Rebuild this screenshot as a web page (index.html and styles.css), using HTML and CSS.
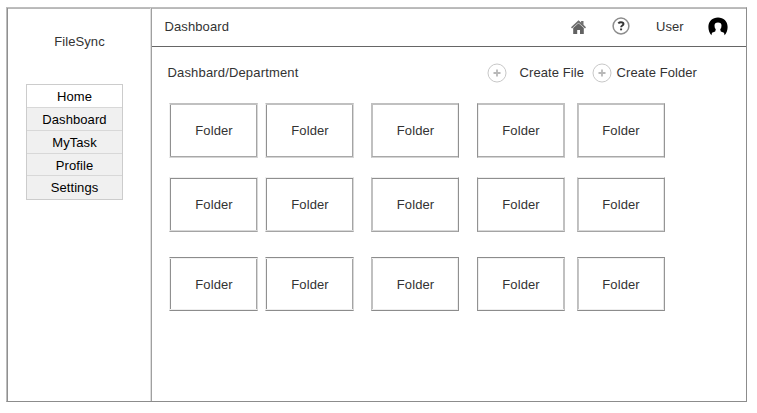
FILE: index.html
```html
<!DOCTYPE html>
<html lang="en">
<head>
<meta charset="utf-8">
<title>FileSync</title>
<link rel="stylesheet" href="styles.css">
</head>
<body>
<div class="window">
  <aside class="sidebar">
    <div class="brand">FileSync</div>
    <nav class="menu">
      <a class="menu-item active">Home</a>
      <a class="menu-item">Dashboard</a>
      <a class="menu-item">MyTask</a>
      <a class="menu-item">Profile</a>
      <a class="menu-item">Settings</a>
    </nav>
  </aside>
  <main class="main">
    <header class="topbar">
      <span class="title">Dashboard</span>
      <svg class="home" viewBox="0 0 15 14" width="15" height="14"><path d="M0 7.2 7.5.2l2.6 2.4V1h2.4v3.7L15 7.2l-1 1.2L7.5 2.8 1 8.4z" fill="#707070"/><path d="M2.2 8 7.5 3.2l5.3 4.8V14H9V10H6.2v4h-4z" fill="#626262"/></svg>
      <svg class="help" viewBox="0 0 18 18" width="18" height="18"><circle cx="9" cy="9" r="7.9" fill="#fff" stroke="#8c8c8c" stroke-width="1.5"/><path d="M6.3 6.3Q7.3 5.2 9 5.2q2.5 0 2.5 1.8c0 1.5-2.4 1.6-2.4 3.3" fill="none" stroke="#333" stroke-width="1.9"/><path d="M8.1 11.5h2v1.8h-2z" fill="#333"/></svg>
      <span class="user">User</span>
      <svg class="avatar" viewBox="0 0 20 19" width="20" height="19"><path d="M3.4 18.2C1.4 16 .4 13 .4 10 .4 4 4.5.4 10 .4S19.6 4 19.6 10c0 3-1 6-3 8.2L16 15.8 12.8 14.6 12.2 12.2Q13.5 11 13.5 8.7 13.5 5.4 10 5.4T6.5 8.7Q6.5 11 7.8 12.2L7.2 14.6 4 15.8z" fill="#000"/></svg>
    </header>
    <div class="toolbar">
      <span class="path">Dashbard/Department</span>
      <svg class="add" viewBox="0 0 20 20" width="20" height="20"><circle cx="10" cy="10" r="9" fill="#fff" stroke="#c8c8c8"/><path d="M6.5 10h7M10 6.5v7" stroke="#b8b8b8" stroke-width="1.8"/></svg>
      <span class="create-file">Create File</span>
      <svg class="add" viewBox="0 0 20 20" width="20" height="20"><circle cx="10" cy="10" r="9" fill="#fff" stroke="#c8c8c8"/><path d="M6.5 10h7M10 6.5v7" stroke="#b8b8b8" stroke-width="1.8"/></svg>
      <span class="create-folder">Create Folder</span>
    </div>
    <section class="folders">
      <div class="folder r1 c1">Folder</div><div class="folder r1 c2">Folder</div><div class="folder r1 c3">Folder</div><div class="folder r1 c4">Folder</div><div class="folder r1 c5">Folder</div>
      <div class="folder r2 c1">Folder</div><div class="folder r2 c2">Folder</div><div class="folder r2 c3">Folder</div><div class="folder r2 c4">Folder</div><div class="folder r2 c5">Folder</div>
      <div class="folder r3 c1">Folder</div><div class="folder r3 c2">Folder</div><div class="folder r3 c3">Folder</div><div class="folder r3 c4">Folder</div><div class="folder r3 c5">Folder</div>
    </section>
  </main>
</div>
</body>
</html>
```
FILE: styles.css
```css
* { box-sizing: border-box; }
body {
  margin: 0;
  padding: 7px 0 0 6px;
  background: #fff;
  color: #333;
  font: 13px/16px "Liberation Sans", Arial, sans-serif;
  letter-spacing: 0.08px;
  overflow: hidden;
}
.window {
  display: flex;
  width: 741px;
  height: 395px;
  border: 1px solid;
  border-color: #bdbdbd #8c8c8c #8c8c8c #bdbdbd;
  box-shadow: inset 1px 0 #909090, inset 0 1px #b8b8b8, 0 1px #eee;
}
.sidebar {
  width: 145px;
  padding: 26px 0 0 19px;
  border-right: 1px solid #a0a0a0;
  box-shadow: inset -1px 0 #dedede;
}
.brand { width: 107px; text-align: center; }
.menu {
  width: 97px;
  height: 116px;
  margin-top: 34px;
  border: 1px solid #ccc;
  display: grid;
  grid-template-rows: 23px 23px 23px 22px 23px;
  color: #000;
}
.menu-item {
  text-align: center;
  line-height: 23px;
  background: #f0f0f0;
  border-bottom: 1px solid #d8d8d8;
}
.menu-item:last-child { border-bottom: 0; }
.menu-item.active { background: #fff; }
.main { flex: 1; }
.topbar {
  display: flex;
  align-items: flex-start;
  height: 39px;
  padding: 11px 0 0 12.5px;
  border-bottom: 1px solid #666;
}
.title { width: 406px; letter-spacing: 0.1px; }
.home { margin-top: 1px; }
.help { margin: -2px 26px 0 26.5px; }
.user { width: 52px; }
.avatar { margin-top: -2px; }
.toolbar {
  display: flex;
  align-items: center;
  height: 20px;
  margin: 16px 0 0 15px;
  white-space: nowrap;
}
.path { width: 319.5px; padding-left: 0.5px; letter-spacing: 0.16px; }
.create-file { width: 72.5px; margin-left: 13px; }
.create-folder { margin-left: 4.5px; }
.folders {
  display: grid;
  grid-template-columns: 96px 106px 106px 100px 88px;
  grid-template-rows: 74px 80px 54px;
  margin: 20px 0 0 17px;
}
.folder {
  width: 88px;
  height: 55px;
  border: 1px solid;
  border-color: var(--t) var(--r) var(--b) var(--l);
  box-shadow: inset 0 1px var(--ti), inset 0 -1px var(--bi), inset 1px 0 var(--li), inset -1px 0 var(--ri);
  text-align: center;
  line-height: 53px;
}
.r1 { --t: #c0c0c0; --ti: #c0c0c0; --b: #d4d4d4; --bi: #a8a8a8; }
.r2 { --t: #efefef; --ti: #8f8f8f; --b: #a4a4a4; --bi: #d8d8d8; }
.r3 { --t: #8c8c8c; --ti: #f2f2f2; --b: #8c8c8c; --bi: #eee; height: 54px; }
.c1, .c2 { --l: #f0f0f0; --li: #909090; --r: #d8d8d8; --ri: #a4a4a4; width: 89px; padding-left: 1px; }
.c3 { --l: #c0c0c0; --li: #c0c0c0; --r: #909090; --ri: #efefef; padding-left: 1px; }
.c4 { --l: #929292; --li: #efefef; --r: #c0c0c0; --ri: #c0c0c0; }
.c5 { --l: #bebebe; --li: #c4c4c4; --r: #959595; --ri: #e6e6e6; }
```
